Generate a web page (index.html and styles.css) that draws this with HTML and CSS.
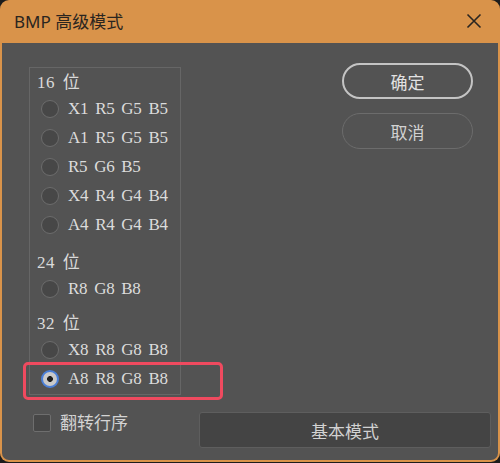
FILE: index.html
```html
<!DOCTYPE html>
<html>
<head>
<meta charset="utf-8">
<link rel="stylesheet" href="styles.css">
</head>
<body>
<div class="window">
  <div class="titlebar">
    <span class="title">BMP 高级模式</span>
    <svg class="close" width="16" height="16" viewBox="0 0 16 16"><path d="M1.5 1.5 L14.5 14.5 M14.5 1.5 L1.5 14.5" stroke="#2a2520" stroke-width="1.6" fill="none"/></svg>
  </div>
  <div class="content">
    <div class="top">
      <div class="group">
        <div class="glabel">16 位</div>
        <div class="row"><span class="radio"></span><span class="rtext">X1 R5 G5 B5</span></div>
        <div class="row"><span class="radio"></span><span class="rtext">A1 R5 G5 B5</span></div>
        <div class="row"><span class="radio"></span><span class="rtext">R5 G6 B5</span></div>
        <div class="row"><span class="radio"></span><span class="rtext">X4 R4 G4 B4</span></div>
        <div class="row"><span class="radio"></span><span class="rtext">A4 R4 G4 B4</span></div>
        <div class="glabel g2">24 位</div>
        <div class="row"><span class="radio"></span><span class="rtext">R8 G8 B8</span></div>
        <div class="glabel g3">32 位</div>
        <div class="row"><span class="radio"></span><span class="rtext">X8 R8 G8 B8</span></div>
        <div class="row"><span class="radio checked"></span><span class="rtext">A8 R8 G8 B8</span></div>
      </div>
      <div class="side">
        <div class="pill ok">确定</div>
        <div class="pill cancel">取消</div>
      </div>
    </div>
    <div class="bottom">
      <div class="check"><span class="box"></span><span class="ctext">翻转行序</span></div>
      <div class="basic">基本模式</div>
    </div>
    <div class="highlight"></div>
  </div>
</div>
</body>
</html>
```

FILE: styles.css
```css
html, body {
  margin: 0;
  padding: 0;
  background: #1c1c1c;
  width: 500px;
  height: 463px;
  overflow: hidden;
}
.window {
  width: 500px;
  height: 462px;
  background: #d9934a;
  border-radius: 9px;
  display: flex;
  flex-direction: column;
  font-family: "Noto Sans", "Noto Sans CJK SC", sans-serif;
}
.titlebar {
  height: 43px;
  display: flex;
  align-items: center;
  justify-content: space-between;
  padding: 0 18px 0 14px;
  box-sizing: border-box;
}
.title {
  font-size: 17px;
  color: #2a2520;
  margin-top: -2px;
}
.close {
  margin-top: -1px;
}
.content {
  position: relative;
  flex: 1;
  margin: 0 2px 2px 2px;
  background: #535353;
  border-radius: 0 0 7px 7px;
  padding: 20px 0 0 27px;
  box-sizing: border-box;
}
.top {
  display: flex;
}
.group {
  margin-top: 4px;
  width: 152px;
  height: 328px;
  box-sizing: border-box;
  border: 1px solid #666;
  padding: 4px 0 0 7px;
}
.glabel {
  height: 22px;
  line-height: 22px;
  font-size: 17px;
  color: #dadada;
  font-family: "Liberation Serif", "Noto Sans CJK SC", serif;
  letter-spacing: 0.5px;
  word-spacing: 3px;
}
.g2 { margin-top: 13px; }
.g3 { margin-top: 10px; }
.row {
  height: 29px;
  display: flex;
  align-items: center;
  padding-left: 4px;
}
.radio {
  width: 18px;
  height: 18px;
  box-sizing: border-box;
  border-radius: 50%;
  border: 1.5px solid #6c6c6c;
  background: #474747;
  flex: none;
}
.radio.checked {
  border: 2px solid #4a7fd8;
  background: radial-gradient(circle, #1e1e1e 0 2.6px, #c9c9c9 3.2px);
}
.rtext {
  margin-left: 9px;
  font-family: "Liberation Serif", serif;
  font-size: 17px;
  letter-spacing: -0.3px;
  word-spacing: 3px;
  color: #dcdcdc;
}
.side {
  margin-left: 161px;
  display: flex;
  flex-direction: column;
  gap: 14px;
}
.pill {
  width: 131px;
  height: 36px;
  box-sizing: border-box;
  border-radius: 18px;
  display: flex;
  align-items: center;
  justify-content: center;
  font-size: 17px;
  color: #e2e2e2;
}
.ok {
  border: 2px solid #c4c4c4;
}
.cancel {
  border: 1.5px solid #6c6c6c;
  color: #d2d2d2;
}
.bottom {
  display: flex;
  align-items: flex-start;
  margin-top: 17px;
}
.check {
  width: 170px;
  display: flex;
  align-items: center;
  padding-left: 4px;
  margin-top: 2px;
  box-sizing: border-box;
}
.box {
  width: 18px;
  height: 18px;
  box-sizing: border-box;
  border: 1.5px solid #6e6e6e;
  background: #474747;
  border-radius: 2px;
}
.ctext {
  margin-left: 9px;
  font-size: 17px;
  color: #d4d4d4;
  line-height: 18px;
}
.basic {
  width: 292px;
  height: 36px;
  box-sizing: border-box;
  background: #444;
  border: 1px solid #5e5e5e;
  border-radius: 3px;
  display: flex;
  align-items: center;
  justify-content: center;
  font-size: 17px;
  color: #d2d2d2;
}
.highlight {
  position: absolute;
  left: 21px;
  top: 319px;
  width: 200px;
  height: 38px;
  box-sizing: border-box;
  border: 3px solid #ef4a5f;
  border-radius: 5px;
}
```
